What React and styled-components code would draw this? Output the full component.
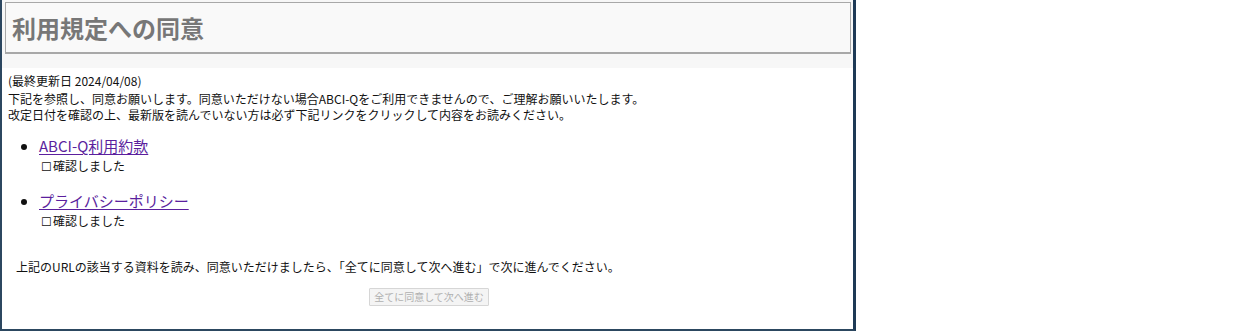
import React from 'react';
import styled, { createGlobalStyle } from 'styled-components';

const GlobalStyle = createGlobalStyle`
  html, body {
    margin: 0;
    padding: 0;
    background: #ffffff;
  }
  body {
    font-family: "Noto Sans CJK JP", "Noto Sans", sans-serif;
  }
`;

const Frame = styled.div`
  width: 856px;
  height: 331px;
  box-sizing: border-box;
  border-left: 2px solid #2c4760;
  border-right: 3px solid #1e3a56;
  border-bottom: 2px solid #2c4760;
  display: flex;
  flex-direction: column;
  overflow: hidden;
`;

const Header = styled.div`
  background: #f7f7f7;
  padding: 2px 2px 14px 3px;
`;

const TitleBox = styled.div`
  height: 49px;
  border: 1px solid #a8a8a8;
  border-bottom-width: 2px;
  background: #f9f9f9;
  display: flex;
  align-items: center;
  padding-left: 6px;
`;

const Title = styled.h1`
  margin: 0;
  font-size: 24px;
  font-weight: 700;
  color: #777777;
`;

const Body = styled.div`
  padding: 5px 0 0 6px;
  font-size: 12px;
  line-height: 16px;
  color: #111111;
`;

const Line = styled.div`
  white-space: nowrap;
  margin-bottom: ${(p) => (p.$gap ? '2px' : '0')};
`;

const List = styled.ul`
  margin: 13px 0 0 0;
  padding-left: 31px;
`;

const Item = styled.li`
  margin-bottom: ${(p) => (p.$last ? '0' : '16px')};
  font-size: 15px;
  line-height: 20px;
`;

const DocLink = styled.a`
  color: #5b1f9e;
  text-decoration: underline;
  text-underline-offset: 2px;
`;

const Check = styled.div`
  font-size: 12px;
  line-height: 18px;
  padding-top: 1px;
  color: #111111;
  padding-left: 2px;
`;

const Box = styled.span`
  font-size: 11.5px;
  margin-right: 1px;
`;

const Note = styled.p`
  margin: 28px 0 0 8px;
  font-size: 12px;
  line-height: 17px;
`;

const ButtonRow = styled.div`
  display: flex;
  justify-content: center;
  margin-top: 13px;
  padding-right: 3px;
`;

const NextButton = styled.button`
  font-family: "Noto Sans CJK JP", "Noto Sans", sans-serif;
  font-size: 10px;
  line-height: 14px;
  padding: 1px 4px;
  color: #b0b0b0;
  background: #f4f4f4;
  border: 1px solid #d6d6d6;
  border-radius: 1px;
`;

const docs = [
  { name: 'ABCI-Q利用約款' },
  { name: 'プライバシーポリシー' },
];

const App = () => (
  <>
    <GlobalStyle />
    <Frame>
      <Header>
        <TitleBox>
          <Title>利用規定への同意</Title>
        </TitleBox>
      </Header>
      <Body>
        <Line $gap>(最終更新日 2024/04/08)</Line>
        <Line>下記を参照し、同意お願いします。同意いただけない場合ABCI-Qをご利用できませんので、ご理解お願いいたします。</Line>
        <Line>改定日付を確認の上、最新版を読んでいない方は必ず下記リンクをクリックして内容をお読みください。</Line>
        <List>
          {docs.map((doc, i) => (
            <Item key={i} $last={i === docs.length - 1}>
              <DocLink href="#">{doc.name}</DocLink>
              <Check>
                <Box>☐</Box>確認しました
              </Check>
            </Item>
          ))}
        </List>
        <Note>上記のURLの該当する資料を読み、同意いただけましたら、「全てに同意して次へ進む」で次に進んでください。</Note>
        <ButtonRow>
          <NextButton disabled>全てに同意して次へ進む</NextButton>
        </ButtonRow>
      </Body>
    </Frame>
  </>
);

export default App;
